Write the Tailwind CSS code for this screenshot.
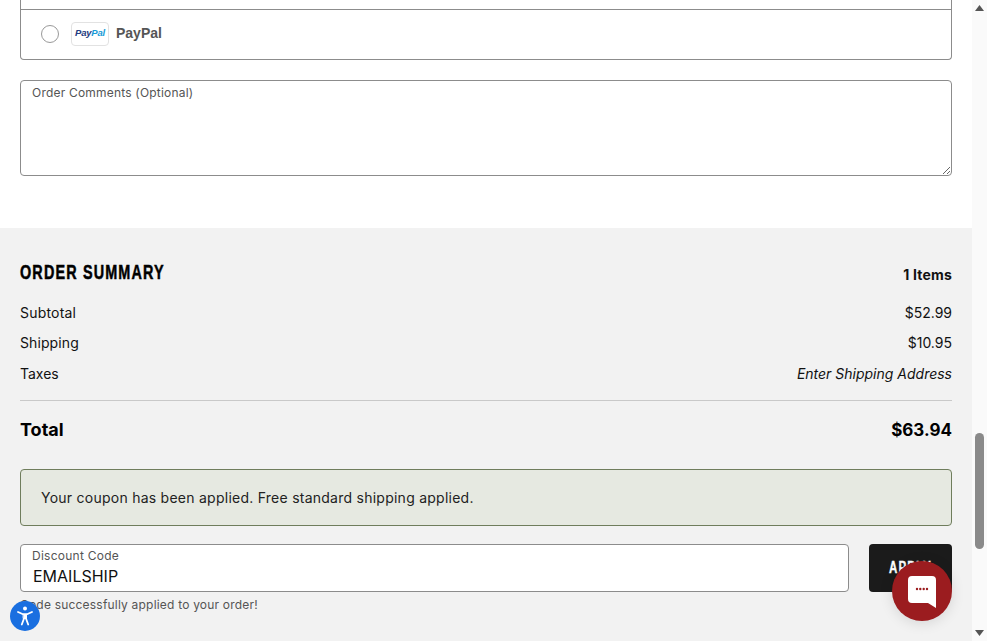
<!DOCTYPE html>
<html lang="en">
<head>
  <meta charset="UTF-8">
  <title>Checkout</title>
  <script src="https://cdn.jsdelivr.net/npm/@tailwindcss/browser@4"></script>
</head>
<body class="h-[641px] w-[987px] overflow-hidden bg-white font-['Inter',sans-serif] text-[#111]">
  <div class="flex h-[641px]">
    <!-- page -->
    <main class="w-[972px] overflow-hidden">
      <div class="px-5">
        <!-- payment methods -->
        <div class="rounded-b border border-t-0 border-[#8c8c8c]">
          <div class="h-[10px] border-b border-[#8c8c8c]"></div>
          <div class="flex h-[49px] items-center pb-[2px] pl-5">
            <span class="h-[18px] w-[18px] rounded-full border border-[#999] bg-white"></span>
            <span class="ml-3 flex h-6 w-[38px] items-center justify-center rounded-sm border border-[#e2e2e2] font-['Liberation_Sans',sans-serif] text-[9.5px] font-bold italic tracking-[-0.2px] text-[#253b80]">Pay<span class="text-[#179bd7]">Pal</span></span>
            <span class="ml-[7px] font-['Liberation_Sans',sans-serif] text-[14px] font-bold text-[#555]">PayPal</span>
          </div>
        </div>
        <!-- comments -->
        <div class="relative mt-5 h-24">
          <textarea class="block h-24 w-full rounded border border-[#8c8c8c] bg-white px-[11px] pt-[3px] text-[12px] tracking-[0.2px] text-[#555] placeholder:text-[#555]" placeholder="Order Comments (Optional)"></textarea>
        </div>
      </div>

      <!-- order summary -->
      <section class="mt-[52px] h-[413px] bg-[#f2f2f2] px-5">
        <div class="flex h-[92px] items-center justify-between pb-[8px] pt-[4px]">
          <h2 class="origin-left scale-x-[0.72] font-['Liberation_Sans',sans-serif] text-[20px] font-bold tracking-[1.6px] text-black [-webkit-text-stroke:0.5px_black]">ORDER SUMMARY</h2>
          <span class="mt-[5px] text-[14px] font-bold tracking-[0.2px] text-[#111]">1 Items</span>
        </div>
        <div class="-mt-[22px] text-[14px] leading-[20px]">
          <div class="flex justify-between py-[5px]"><span class="tracking-[0.2px]">Subtotal</span><span>$52.99</span></div>
          <div class="flex justify-between pb-[6px] pt-[5px]"><span class="tracking-[0.1px]">Shipping</span><span>$10.95</span></div>
          <div class="flex justify-between py-[5px]"><span>Taxes</span><span class="italic">Enter Shipping Address</span></div>
        </div>
        <div class="mt-[11px] border-t border-[#c9c9c9]"></div>
        <div class="mt-[17px] flex justify-between text-[18px] font-bold leading-[24px] text-black"><span>Total</span><span class="text-[17px]">$63.94</span></div>
        <div class="mt-[27px] flex h-[57px] items-center rounded border border-[#6f7d5c] bg-[#e6e9e1] pl-5 text-[14px] tracking-[0.25px] text-[#222]">Your coupon has been applied. Free standard shipping applied.</div>
        <div class="mt-[18px] flex gap-5">
          <div class="h-12 w-[829px] rounded border border-[#8c8c8c] bg-white px-3 pt-[3px]">
            <div class="-ml-px text-[12px] leading-[15px] tracking-[0.25px] text-[#555]">Discount Code</div>
            <div class="mt-[3px] text-[16px] leading-[20px] text-[#111]">EMAILSHIP</div>
          </div>
          <button class="flex h-12 w-[83px] items-center rounded bg-[#1b1b1b] pl-5 font-['Liberation_Sans',sans-serif] text-[16px] font-bold tracking-[1.5px] text-white [-webkit-text-stroke:0.4px_white]"><span class="origin-left scale-x-[0.72]">APPLY</span></button>
        </div>
        <p class="mt-[5px] text-[12px] leading-[16px] tracking-[0.2px] text-[#555]">Code successfully applied to your order!</p>
      </section>
    </main>

    <!-- scrollbar -->
    <div class="relative w-[15px] bg-[#fafafa]">
      <svg class="absolute left-[3px] top-[5px]" width="9" height="6" viewBox="0 0 9 6"><path d="M4.500 0 9 6H0z" fill="#555"/></svg>
      <div class="absolute left-[3px] top-[433px] h-[116px] w-[9px] rounded-[5px] bg-[#8a8a8a]"></div>
      <svg class="absolute bottom-[5px] left-[3px]" width="9" height="6" viewBox="0 0 9 6"><path d="M0 0h9L4.500 6z" fill="#555"/></svg>
    </div>
  </div>

  <!-- accessibility widget -->
  <div class="absolute left-[10px] top-[601px] flex h-[30px] w-[30px] items-center justify-center rounded-full bg-[#1a6fe0]">
    <svg width="24" height="24" viewBox="0 0 24 24" fill="none" stroke="#fff" stroke-linecap="round" stroke-linejoin="round">
      <circle cx="12" cy="4.500" r="2" fill="#fff" stroke="none"/>
      <path d="M5 8l5 2.200h4L19 8" stroke-width="1.800"/>
      <path d="M10.500 10.500h3v4h-3z" fill="#fff" stroke-width="1"/>
      <path d="M11 14.500 8.800 20.500M13 14.500l2.200 6" stroke-width="1.800"/>
    </svg>
  </div>

  <!-- chat button -->
  <div class="absolute left-[892px] top-[561px] flex h-[60px] w-[60px] items-center justify-center rounded-full bg-[#9b1c1f] shadow-[0_2px_14px_rgba(0,0,0,0.12)]">
    <svg class="mt-[2px]" width="28" height="32" viewBox="0 0 28 32">
      <path d="M4 0h20a4 4 0 0 1 4 4v28l-8-5H4a4 4 0 0 1-4-4V4a4 4 0 0 1 4-4z" fill="#fff"/>
      <circle cx="9" cy="13" r="1.200" fill="#9b1c1f"/>
      <circle cx="12.300" cy="13" r="1.200" fill="#9b1c1f"/>
      <circle cx="15.700" cy="13" r="1.200" fill="#9b1c1f"/>
      <circle cx="19" cy="13" r="1.200" fill="#9b1c1f"/>
    </svg>
  </div>
</body>
</html>
